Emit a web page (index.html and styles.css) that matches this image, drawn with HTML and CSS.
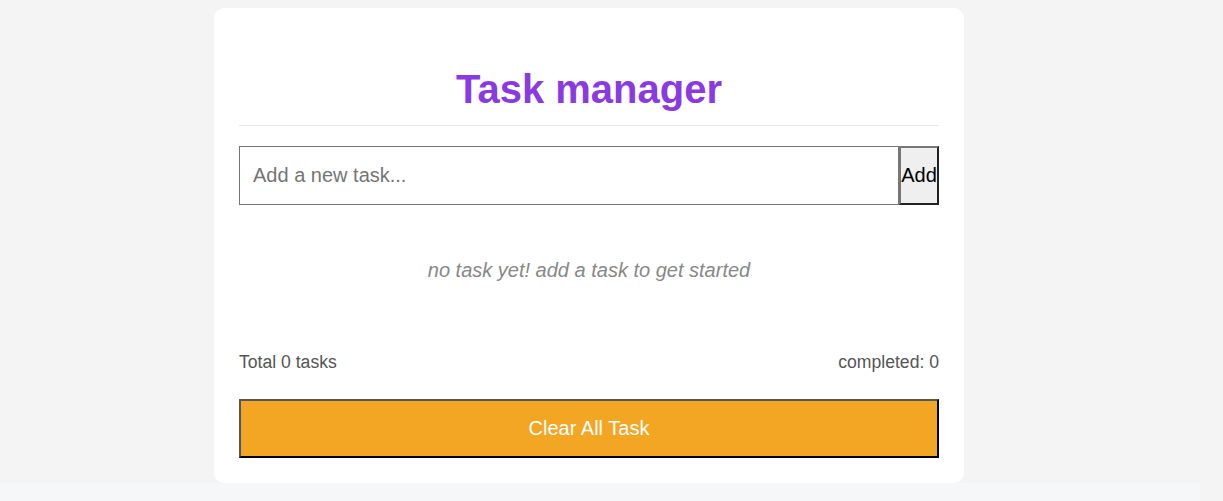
FILE: index.html
```html
<!DOCTYPE html>
<html lang="en">
<head>
<meta charset="utf-8">
<title>Task manager</title>
<link rel="stylesheet" href="styles.css">
</head>
<body>
<div class="page">
  <div class="card">
    <h1 class="title">Task manager</h1>
    <div class="add-row">
      <input class="task-input" type="text" placeholder="Add a new task...">
      <button class="add-btn">Add</button>
    </div>
    <p class="empty">no task yet! add a task to get started</p>
    <div class="stats">
      <span>Total 0 tasks</span>
      <span>completed: 0</span>
    </div>
    <button class="clear-btn">Clear All Task</button>
  </div>
</div>
<div class="strip"></div>
</body>
</html>
```

FILE: styles.css
```css
html {
  background: #f4f4f4;
}
body {
  margin: 0;
  font-family: "Liberation Sans", Arial, sans-serif;
  background: #f4f4f4;
}
.page {
  display: flex;
  justify-content: center;
  padding-top: 8px;
  padding-right: 45px;
}
.card {
  width: 700px;
  background: #ffffff;
  border-radius: 10px;
  padding: 33px 25px 25px;
}
.title {
  margin: 25px 0 0;
  padding-bottom: 13px;
  border-bottom: 1px solid #e8e8e8;
  text-align: center;
  font-size: 40px;
  line-height: 46px;
  font-weight: bold;
  color: #8a3ae2;
}
.add-row {
  display: flex;
  margin-top: 20px;
  height: 59px;
}
.task-input {
  flex: 1;
  min-width: 0;
  box-sizing: border-box;
  height: 59px;
  margin: 0;
  padding: 0 13px;
  border: 1px solid #767676;
  font-family: "Liberation Sans", Arial, sans-serif;
  font-size: 20px;
  color: #222;
  outline: none;
}
.task-input::placeholder {
  color: #757575;
}
.add-btn {
  box-sizing: border-box;
  width: 40px;
  height: 59px;
  margin: 0;
  padding: 0;
  background: #efefef;
  border: 2px solid;
  border-color: #767676 #222 #222 #767676;
  font-family: "Liberation Sans", Arial, sans-serif;
  font-size: 20px;
  color: #000;
}
.empty {
  margin: 54px 0 0;
  text-align: center;
  font-style: italic;
  font-size: 20px;
  line-height: 23px;
  color: #888888;
}
.stats {
  display: flex;
  justify-content: space-between;
  margin-top: 70px;
  font-size: 17.6px;
  line-height: 20px;
  color: #555555;
}
.clear-btn {
  display: block;
  box-sizing: border-box;
  width: 100%;
  height: 59px;
  margin-top: 27px;
  background: #f3a524;
  border: 2px solid;
  border-color: #555 #000 #000 #555;
  font-family: "Liberation Sans", Arial, sans-serif;
  font-size: 20px;
  color: #ffffff;
}
.strip {
  width: 1200px;
  height: 40px;
  background: #f6f7f9;
}
```
